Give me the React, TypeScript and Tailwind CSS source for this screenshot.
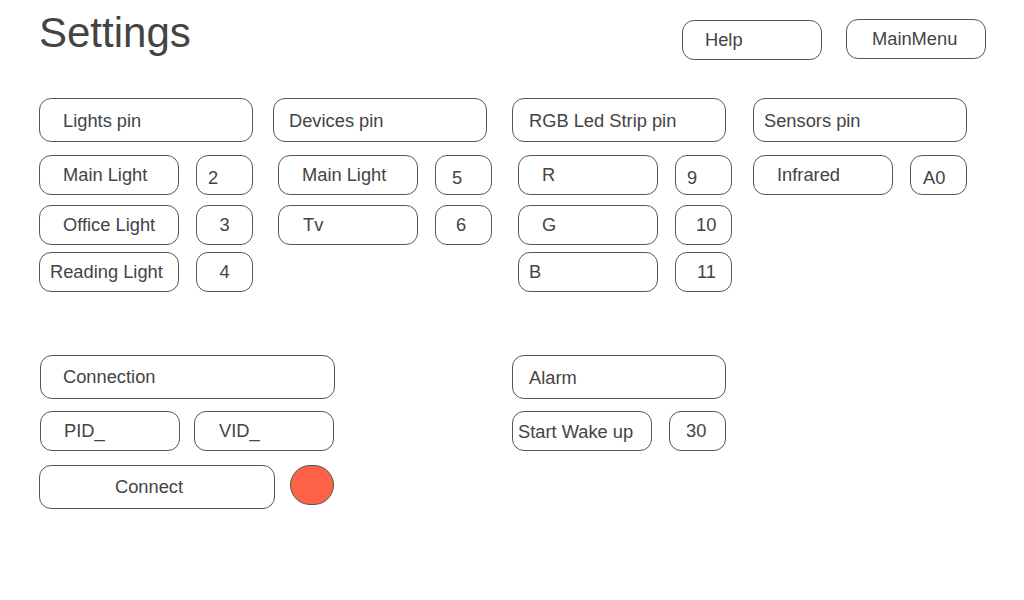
import React from 'react';

const box =
  'flex shrink-0 items-center rounded-[12px] border border-[#555] bg-white text-[18.3px] leading-none text-[#444]';

const PinRow = ({
  label,
  value,
  labelClass,
  valueClass,
  rowClass,
}: {
  label: string;
  value?: string;
  labelClass: string;
  valueClass?: string;
  rowClass: string;
}) => (
  <div className={`flex gap-[17px] ${rowClass}`}>
    <div className={`${box} h-[40px] w-[140px] ${labelClass}`}>{label}</div>
    {value !== undefined && (
      <div className={`${box} h-[40px] w-[57px] ${valueClass}`}>{value}</div>
    )}
  </div>
);

const App = () => {
  return (
    <div className="h-[600px] w-[1024px] overflow-hidden bg-white font-['Liberation_Sans',Arial,sans-serif] text-[#444]">
      {/* Header */}
      <header className="flex items-start pl-[39px] pr-[38px]">
        <h1 className="pt-[12px] text-[42px] font-normal leading-[42px]">Settings</h1>
        <div className="ml-auto flex items-start gap-[24px]">
          <button className={`${box} mt-[20px] h-[40px] w-[140px] pl-[22px]`}>Help</button>
          <button className={`${box} mt-[19px] h-[40px] w-[140px] pl-[25px]`}>MainMenu</button>
        </div>
      </header>

      {/* Pins */}
      <section className="mt-[38px] flex pl-[39px]">
        <div className="flex w-[214px] flex-col">
          <div className={`${box} h-[44px] w-[214px] pl-[23px] pt-[2px]`}>Lights pin</div>
          <PinRow rowClass="mt-[13px]" label="Main Light" value="2" labelClass="pl-[23px]" valueClass="pl-[11px] pt-[6px]" />
          <PinRow rowClass="mt-[10px]" label="Office Light" value="3" labelClass="pl-[23px]" valueClass="justify-center" />
          <PinRow rowClass="mt-[7px]" label="Reading Light" value="4" labelClass="pl-[10px]" valueClass="justify-center" />
        </div>

        <div className="ml-[20px] flex w-[214px] flex-col">
          <div className={`${box} h-[44px] w-[214px] pl-[15px] pt-[2px]`}>Devices pin</div>
          <div className="pl-[5px]">
            <PinRow rowClass="mt-[13px]" label="Main Light" value="5" labelClass="pl-[23px]" valueClass="pl-[16px] pt-[6px]" />
            <PinRow rowClass="mt-[10px]" label="Tv" value="6" labelClass="pl-[24px]" valueClass="pl-[20px]" />
          </div>
        </div>

        <div className="ml-[25px] flex w-[214px] flex-col">
          <div className={`${box} h-[44px] w-[214px] pl-[16px] pt-[2px]`}>RGB Led Strip pin</div>
          <div className="pl-[6px]">
            <PinRow rowClass="mt-[13px]" label="R" value="9" labelClass="pl-[23px]" valueClass="pl-[11px] pt-[6px]" />
            <PinRow rowClass="mt-[10px]" label="G" value="10" labelClass="pl-[23px]" valueClass="pl-[20px]" />
            <PinRow rowClass="mt-[7px]" label="B" value="11" labelClass="pl-[10px]" valueClass="pl-[21px]" />
          </div>
        </div>

        <div className="ml-[27px] flex w-[214px] flex-col">
          <div className={`${box} h-[44px] w-[214px] pl-[10px] pt-[2px]`}>Sensors pin</div>
          <PinRow rowClass="mt-[13px]" label="Infrared" value="A0" labelClass="pl-[23px]" valueClass="pl-[12px] pt-[6px]" />
        </div>
      </section>

      {/* Connection + Alarm */}
      <section className="mt-[63px] flex pl-[39px]">
        <div className="ml-[1px] flex w-[295px] flex-col">
          <div className={`${box} h-[44px] w-[295px] pl-[22px] pt-[1px]`}>Connection</div>
          <div className="mt-[12px] flex gap-[14px]">
            <div className={`${box} h-[40px] w-[140px] pl-[23px]`}>PID_</div>
            <div className={`${box} h-[40px] w-[140px] pl-[24px]`}>VID_</div>
          </div>
          <div className="-ml-[1px] mt-[14px] flex items-start">
            <button className={`${box} h-[44px] w-[236px] pl-[75px]`}>Connect</button>
            <div className="ml-[15px] h-[40px] w-[44px] rounded-full border border-[#555] bg-[#ff6347]" />
          </div>
        </div>

        <div className="ml-[177px] flex w-[214px] flex-col">
          <div className={`${box} h-[44px] w-[214px] pl-[16px] pt-[2px]`}>Alarm</div>
          <PinRow rowClass="mt-[12px]" label="Start Wake up" value="30" labelClass="pl-[5px] pt-[2px]" valueClass="pl-[16px]" />
        </div>
      </section>
    </div>
  );
};

export default App;
